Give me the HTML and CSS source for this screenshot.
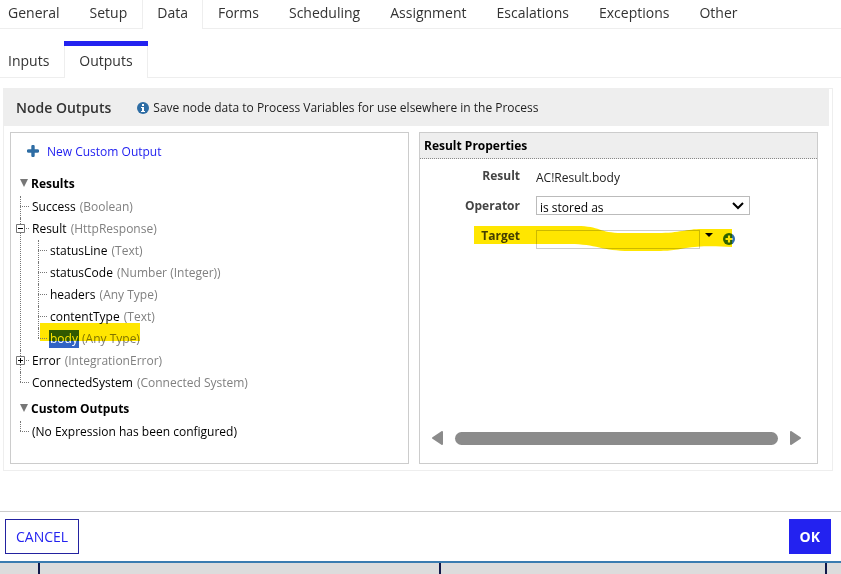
FILE: index.html
```html
<!DOCTYPE html>
<html lang="en">
<head>
  <meta charset="UTF-8" />
  <meta name="viewport" content="width=device-width, initial-scale=1.0"/>
  <title>Node Properties</title>
  <link rel="stylesheet" href="styles.css">
</head>
<body>

  <nav class="tabs">
    <a href="#">General</a>
    <a href="#">Setup</a>
    <a href="#" class="active">Data</a>
    <a href="#">Forms</a>
    <a href="#">Scheduling</a>
    <a href="#">Assignment</a>
    <a href="#">Escalations</a>
    <a href="#">Exceptions</a>
    <a href="#">Other</a>
  </nav>

  <nav class="tabs subtabs">
    <a href="#">Inputs</a>
    <a href="#" class="active">Outputs</a>
  </nav>

  <main class="panel">
    <header class="panel-header">
      <h1>Node Outputs</h1>
      <svg class="info-icon" width="12" height="12" viewBox="0 0 12 12">
        <circle cx="6" cy="6" r="6" fill="#2e6da4"/>
        <path d="M5 2h2v2H5zM4 5h3v4h1v1H4V9h1V6H4z" fill="#fff"/>
      </svg>
      <p>Save node data to Process Variables for use elsewhere in the Process</p>
    </header>

    <div class="columns">
      <section class="box tree-box">
        <a href="#" class="new-output">
          <svg width="12" height="12" viewBox="0 0 12 12">
            <path d="M6 1.500v9M1.500 6h9" stroke="#2e6da4" stroke-width="3.4" stroke-linecap="round"/>
          </svg>
          New Custom Output
        </a>

        <h2 class="group"><svg width="8" height="8" viewBox="0 0 8 8"><path d="M0 0h8L4 8z" fill="#777"/></svg>Results</h2>
        <ul class="tree">
          <li><span class="node">Success <em>(Boolean)</em></span></li>
          <li>
            <button class="toggle" aria-label="Collapse Result">
              <svg width="9" height="9" viewBox="0 0 9 9"><path d="M.5.5h8v8h-8z" fill="#fff" stroke="#777"/><path d="M2 4.500h5" stroke="#000"/></svg>
            </button>
            <span class="node">Result <em>(HttpResponse)</em></span>
            <ul class="tree">
              <li><span class="node">statusLine <em>(Text)</em></span></li>
              <li><span class="node">statusCode <em>(Number (Integer))</em></span></li>
              <li><span class="node">headers <em>(Any Type)</em></span></li>
              <li><span class="node">contentType <em>(Text)</em></span></li>
              <li><span class="node"><span class="selected">body</span> <em>(Any Type)</em></span><span class="marker"></span></li>
            </ul>
          </li>
          <li>
            <button class="toggle" aria-label="Expand Error">
              <svg width="9" height="9" viewBox="0 0 9 9"><path d="M.5.5h8v8h-8z" fill="#fff" stroke="#777"/><path d="M2 4.500h5M4.500 2v5" stroke="#000"/></svg>
            </button>
            <span class="node">Error <em>(IntegrationError)</em></span>
          </li>
          <li><span class="node">ConnectedSystem <em>(Connected System)</em></span></li>
        </ul>

        <h2 class="group custom"><svg width="8" height="8" viewBox="0 0 8 8"><path d="M0 0h8L4 8z" fill="#777"/></svg>Custom Outputs</h2>
        <ul class="tree">
          <li><span class="node">(No Expression has been configured)</span></li>
        </ul>
      </section>

      <section class="box props">
        <h2 class="props-title">Result Properties</h2>
        <form class="fields">
          <span class="label">Result</span>
          <span class="value">AC!Result.body</span>

          <label class="label" for="operator">Operator</label>
          <div class="select-wrap">
            <select id="operator">
              <option>is stored as</option>
            </select>
            <svg class="chevron" width="12" height="8" viewBox="0 0 12 8"><path d="M1 1l5 5 5-5" fill="none" stroke="#000" stroke-width="2"/></svg>
          </div>

          <label class="label" for="target">Target</label>
          <div class="target">
            <input type="text" id="target">
            <button type="button" class="pick" aria-label="Choose variable">
              <svg width="8" height="4" viewBox="0 0 8 4"><path d="M0 0h8L4 4z" fill="#000"/></svg>
            </button>
            <button type="button" class="add" aria-label="Add target">
              <svg width="12" height="12" viewBox="0 0 12 12"><circle cx="6" cy="6" r="6" fill="#2e6da4"/><path d="M6 2.500v7M2.500 6h7" stroke="#fff" stroke-width="2.2"/></svg>
            </button>
            <svg class="stroke" width="260" height="28" viewBox="0 0 260 28">
              <path d="M0 1H103C126 1 125 8 148 8H184C206 8 212 4 228 4H258V22C240 21 224 21 212 23C196 26 192 26 172 26H156C128 26 122 19 96 19H0z" fill="#ffe600"/>
            </svg>
          </div>
        </form>

        <div class="scrollbar">
          <button type="button" aria-label="Scroll left"><svg width="11" height="14" viewBox="0 0 11 14"><path d="M10 1v12L1 7z" fill="#8b8b8b" stroke="#8b8b8b" stroke-width="2" stroke-linejoin="round"/></svg></button>
          <div class="thumb"></div>
          <button type="button" aria-label="Scroll right"><svg width="11" height="14" viewBox="0 0 11 14"><path d="M1 1v12L10 7z" fill="#8b8b8b" stroke="#8b8b8b" stroke-width="2" stroke-linejoin="round"/></svg></button>
        </div>
      </section>
    </div>
  </main>

  <footer class="actions">
    <button class="btn">CANCEL</button>
    <button class="btn primary">OK</button>
  </footer>

  <div class="lanes">
    <div class="lane edge"></div>
    <div class="lane wide"></div>
    <div class="lane"></div>
    <div class="lane end"></div>
  </div>

</body>
</html>
```
FILE: styles.css
```css
* {
  box-sizing: border-box;
}

body {
  margin: 0;
  min-height: 100vh;
  display: flex;
  flex-direction: column;
  font-family: "Open Sans", sans-serif;
  font-size: 12px;
  color: #222;
  background: #fff;
}

h1, h2, p, ul {
  margin: 0;
  padding: 0;
}

button {
  font-family: inherit;
  padding: 0;
  border: none;
  background: none;
  cursor: pointer;
}

svg {
  display: block;
}

/* tabs */
.tabs {
  display: flex;
  height: 29px;
  border-bottom: 1px solid #eee;
}

.tabs a {
  height: 29px;
  padding: 0 15px;
  line-height: 26px;
  font-size: 14px;
  color: #333;
  text-decoration: none;
}

.tabs a:first-child {
  padding-left: 8px;
}

.tabs a.active {
  padding: 0 14px;
  background: #fff;
  border: solid #eee;
  border-width: 0 1px;
}

.subtabs {
  height: 49px;
  padding-top: 12px;
}

.subtabs a {
  height: 37px;
  line-height: 40px;
}

.subtabs a.active {
  position: relative;
  padding-top: 5px;
  line-height: 30px;
}

.subtabs a.active::before {
  content: "";
  position: absolute;
  left: -1px;
  right: -1px;
  top: 0;
  height: 5px;
  background: #2322f0;
}

/* main panel */
.panel {
  margin: 10px 8px 0 3px;
  border: 1px solid #eee;
}

.panel-header {
  display: flex;
  align-items: center;
  height: 37px;
  margin-right: 3px;
  padding-left: 12px;
  background: #eee;
}

.panel-header h1 {
  font-size: 14px;
  font-weight: 600;
  color: #333;
}

.info-icon {
  margin: 0 4px 0 26px;
}

.columns {
  display: grid;
  grid-template-columns: 1fr 1fr;
  gap: 10px;
  padding: 6px 14px 6px 6px;
}

.box {
  min-height: 332px;
  border: 1px solid #ccc;
}

/* output tree */
.tree-box {
  padding: 7px 8px 20px 9px;
  color: #000;
}

.new-output {
  display: flex;
  align-items: center;
  gap: 8px;
  height: 22px;
  padding-left: 7px;
  color: #2322f0;
  text-decoration: none;
}

.group {
  display: flex;
  align-items: center;
  gap: 3px;
  height: 22px;
  margin: 10px 0 2px;
  font-size: 12px;
  font-weight: 700;
}

.group.custom {
  margin-top: 3px;
}

.tree {
  list-style: none;
}

.tree li {
  position: relative;
  padding-left: 12px;
}

.tree li .tree {
  margin-left: 6px;
}

.tree li::before {
  content: "";
  position: absolute;
  left: 0;
  top: 0;
  bottom: 0;
  border-left: 1px dotted #777;
}

.tree li:last-child::before {
  bottom: auto;
  height: 10px;
}

.tree li::after {
  content: "";
  position: absolute;
  left: 0;
  top: 10px;
  width: 9px;
  border-top: 1px dotted #777;
}

.node {
  display: block;
  line-height: 22px;
}

.node em {
  margin-left: 1px;
  font-style: normal;
  color: #808080;
}

.toggle {
  position: absolute;
  z-index: 1;
  left: -4px;
  top: 6px;
}

.selected {
  display: inline-block;
  padding: 0 1px;
  margin: 0 -1px;
  line-height: 18px;
  color: #fff;
  background: #3163c5;
}

.marker {
  position: absolute;
  left: 2px;
  top: -5px;
  width: 100px;
  height: 18px;
  background: #ffe600;
  mix-blend-mode: multiply;
  pointer-events: none;
}

/* properties */
.props {
  display: flex;
  flex-direction: column;
}

.props-title {
  height: 26px;
  padding-left: 4px;
  line-height: 25px;
  font-size: 12px;
  font-weight: 700;
  color: #000;
  background: #eee;
  border-bottom: 1px dotted #888;
}

.fields {
  display: grid;
  grid-template-columns: 100px 1fr;
  column-gap: 16px;
  row-gap: 11px;
  padding-top: 7px;
}

.label {
  line-height: 19px;
  font-weight: 700;
  text-align: right;
  color: #444;
}

.value {
  height: 19px;
  line-height: 23px;
}

.select-wrap {
  position: relative;
  width: 214px;
}

.select-wrap select {
  display: block;
  width: 100%;
  height: 19px;
  padding: 2px 3px 0;
  font: inherit;
  color: #000;
  background: #fff;
  border: 1px solid #bbb;
  border-radius: 0;
  appearance: none;
}

.chevron {
  position: absolute;
  right: 6px;
  top: 6px;
  pointer-events: none;
}

.target {
  position: relative;
  display: flex;
  align-items: flex-start;
  padding-top: 4px;
}

.target input {
  width: 164px;
  height: 19px;
  padding: 0 4px;
  font: inherit;
  border: 1px solid #ccc;
}

.pick {
  margin: 3px 10px 0 5px;
}

.add {
  margin-top: 3px;
}

.stroke {
  position: absolute;
  left: -62px;
  top: -1px;
  mix-blend-mode: multiply;
  pointer-events: none;
}

.scrollbar {
  display: flex;
  align-items: center;
  gap: 12px;
  margin: auto 16px 18px 12px;
}

.thumb {
  flex: 1;
  height: 13px;
  border-radius: 7px;
  background: #8b8b8b;
}

/* footer */
.actions {
  display: flex;
  justify-content: space-between;
  margin-top: 40px;
  padding: 7px 10px 7px 5px;
  border-top: 1px solid #ccc;
}

.btn {
  height: 35px;
  padding: 0 10px;
  font-size: 14px;
  color: #2322f0;
  border: 1px solid #2322a0;
}

.btn.primary {
  font-weight: 700;
  color: #fff;
  background: #2322f0;
  border-color: #2322f0;
}

/* canvas strip below the dialog */
.lanes {
  flex: 1;
  display: flex;
  min-height: 13px;
  background: #dcdcdc;
  border-top: 2px solid #3a7cb0;
}

.lane {
  flex: 48;
  border-right: 2px solid #10184a;
}

.lane.wide {
  flex: 50;
}

.lane.edge {
  flex: 0 0 40px;
}

.lane.end {
  flex: 0 0 14px;
  border-right: none;
}
```
